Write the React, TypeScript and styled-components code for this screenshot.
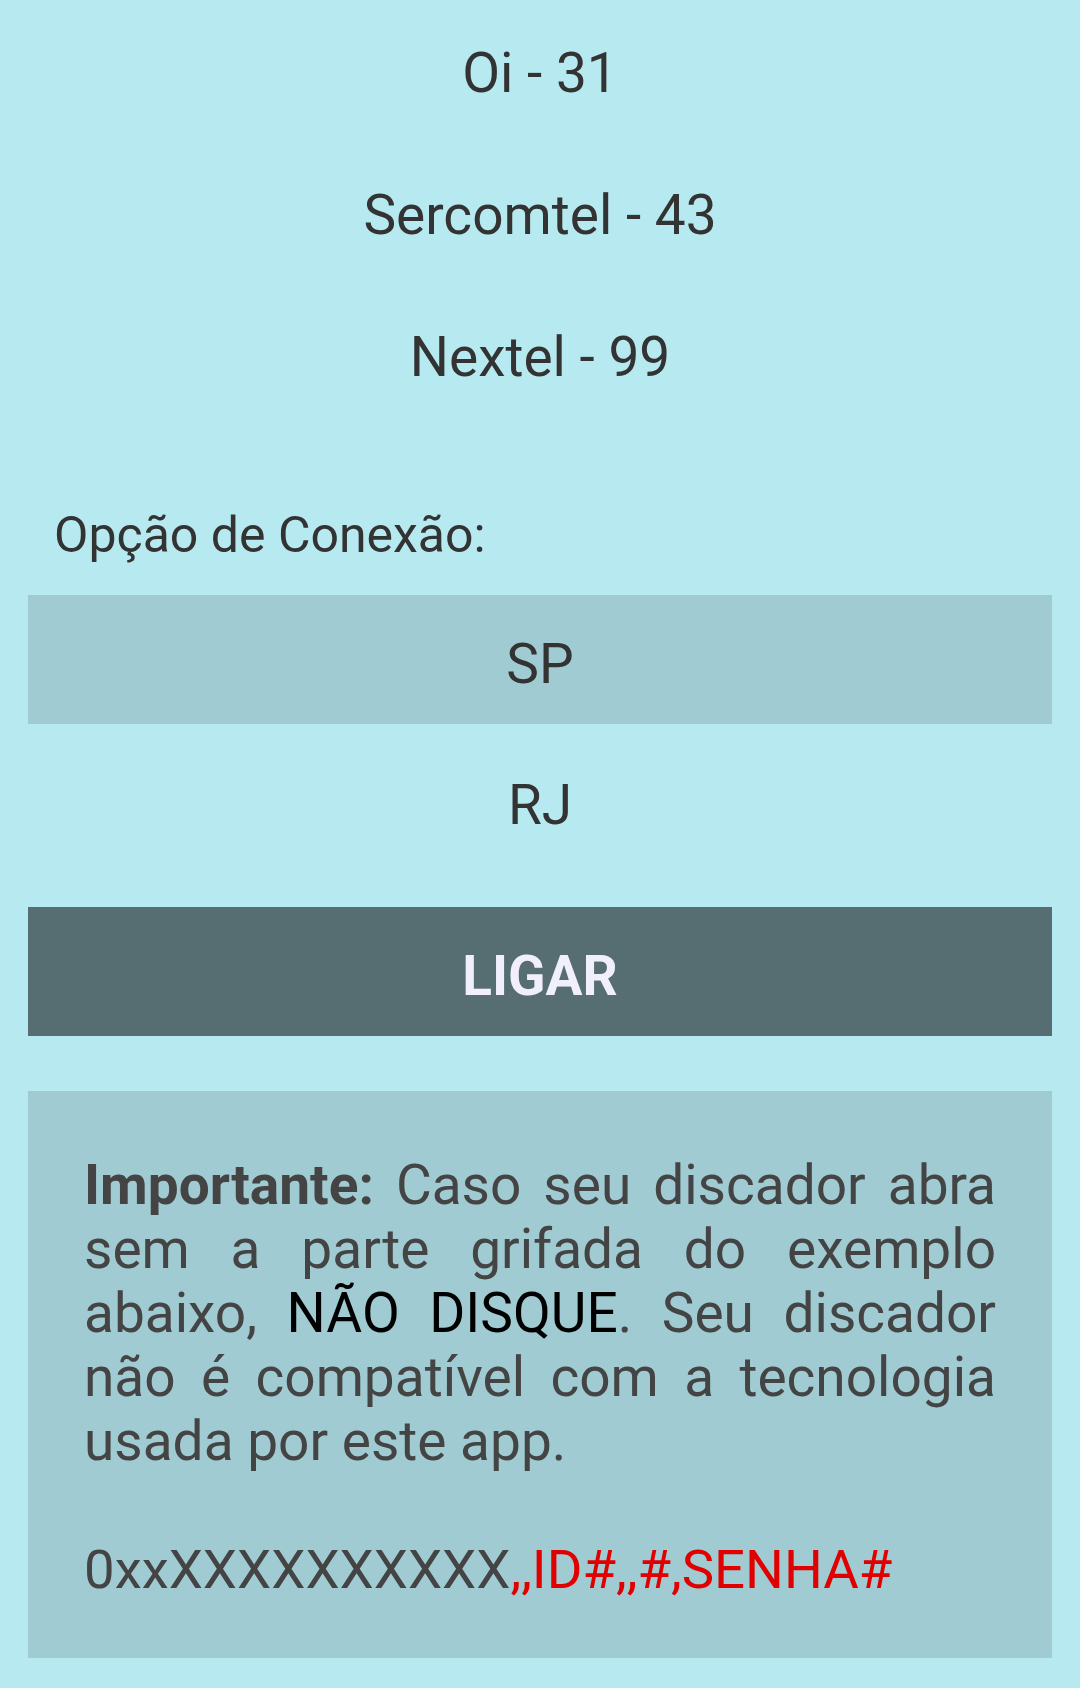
import React from "react";
import styled, { createGlobalStyle } from "styled-components";

const GlobalStyle = createGlobalStyle`
  html, body {
    margin: 0;
    padding: 0;
    background: #b7eaf0;
  }
  body {
    font-family: Roboto, "Noto Sans", "Liberation Sans", sans-serif;
  }
`;

const Page = styled.div`
  width: 1080px;
  min-height: 1688px;
  box-sizing: border-box;
  background: #b7eaf0;
  padding: 4px 28px 0;
  display: flex;
  flex-direction: column;
`;

const List = styled.div<{ $gap?: number }>`
  display: flex;
  flex-direction: column;
  gap: ${(p) => p.$gap ?? 13}px;
`;

const Row = styled.div<{ $selected?: boolean }>`
  height: 129px;
  box-sizing: border-box;
  padding-top: 37px;
  text-align: center;
  font-size: 55px;
  line-height: 64px;
  color: #333333;
  background: ${(p) => (p.$selected ? "#a0cbd2" : "transparent")};
`;

const Label = styled.div`
  margin: 90px 0 32px;
  padding-left: 26px;
  font-size: 50px;
  line-height: 56px;
  color: #333333;
`;

const CallButton = styled.div`
  margin-top: 42px;
  height: 129px;
  box-sizing: border-box;
  padding-top: 37px;
  background: #566e72;
  color: #f2effc;
  text-align: center;
  font-size: 55px;
  line-height: 64px;
  font-weight: 700;
`;

const InfoBox = styled.div`
  margin-top: 55px;
  background: #a0cbd2;
  padding: 62px 56px 57px;
  color: #444444;
  font-size: 55px;
  line-height: 64px;
`;

const Paragraph = styled.p`
  margin: 0;
  text-align: justify;
`;

const Spacer = styled.div`
  height: 64px;
`;

const Example = styled.p`
  margin: 0;
  white-space: nowrap;
  font-size: 54.5px;
`;

const Strong = styled.b`
  font-weight: 700;
`;

const Warn = styled.span`
  color: #000000;
`;

const Red = styled.span`
  color: #e00000;
`;

export default function App() {
  return (
    <>
      <GlobalStyle />
      <Page>
        <List>
          <Row>Oi - 31</Row>
          <Row>Sercomtel - 43</Row>
          <Row>Nextel - 99</Row>
        </List>
        <Label>Opção de Conexão:</Label>
        <List $gap={12}>
          <Row $selected>SP</Row>
          <Row>RJ</Row>
        </List>
        <CallButton>LIGAR</CallButton>
        <InfoBox>
          <Paragraph>
            <Strong>Importante:</Strong> Caso seu discador abra sem a parte
            grifada do exemplo abaixo, <Warn>NÃO DISQUE</Warn>. Seu discador
            não é compatível com a tecnologia usada por este app.
          </Paragraph>
          <Spacer />
          <Example>
            0xxXXXXXXXXXX<Red>,,ID#,,#,SENHA#</Red>
          </Example>
        </InfoBox>
      </Page>
    </>
  );
}
